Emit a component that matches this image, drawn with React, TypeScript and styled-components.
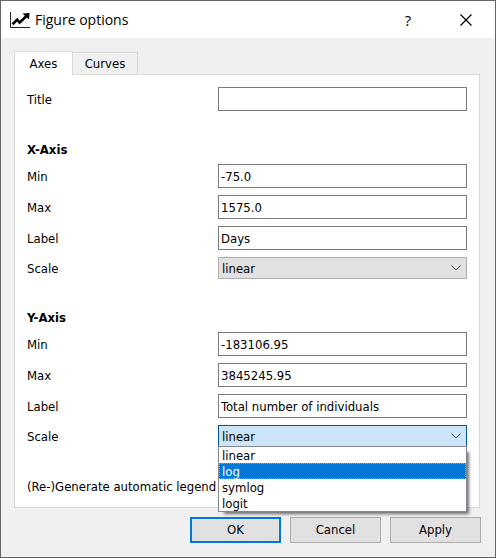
import React, { useState } from "react";
import styled, { createGlobalStyle } from "styled-components";

const GlobalStyle = createGlobalStyle`
  *, *::before, *::after { box-sizing: border-box; }
  body {
    margin: 0;
    background: #f0f0f0;
    color: #000;
    font: 13px/16px "DejaVu Sans Condensed", "Noto Sans", sans-serif;
  }
  button, input, select { font: inherit; color: inherit; }
`;

const Dialog = styled.main`
  min-height: 100vh;
  display: flex;
  flex-direction: column;
  border: 1px solid #646465;
  background: #f0f0f0;
`;

const TitleBar = styled.header`
  display: flex;
  align-items: center;
  height: 37px;
  padding-left: 9px;
  background: #fff;
`;

const AppIcon = styled.svg`
  width: 20px;
  height: 18px;
  margin-right: 5px;
`;

const Heading = styled.h1`
  flex: 1;
  margin: 0;
  font: 14px/20px "Open Sans", sans-serif;
`;

const CaptionButton = styled.button`
  display: flex;
  align-items: center;
  justify-content: center;
  width: 58px;
  height: 36px;
  padding: 0;
  border: 0;
  background: transparent;
  font: 500 15px/20px "Open Sans", sans-serif;
`;

const Body = styled.form`
  flex: 1;
  display: flex;
  flex-direction: column;
  padding: 13px 14px 14px 13px;
`;

const TabList = styled.div`
  display: flex;
  align-items: flex-end;
`;

const Tab = styled.button<{ $active: boolean }>`
  position: relative;
  width: ${(p) => (p.$active ? 59 : 65)}px;
  height: ${(p) => (p.$active ? 24 : 22)}px;
  margin-bottom: ${(p) => (p.$active ? -1 : 0)}px;
  z-index: ${(p) => (p.$active ? 1 : 0)};
  padding: 0;
  border: 1px solid #d9d9d9;
  border-bottom: 0;
  border-left-width: ${(p) => (p.$active ? 1 : 0)}px;
  background: ${(p) => (p.$active ? "#fff" : "#f0f0f0")};
`;

const Panel = styled.section`
  margin-right: 1px;
  padding: 12px;
  border: 1px solid #d9d9d9;
  background: #fff;
`;

const Group = styled.fieldset`
  display: flex;
  flex-direction: column;
  gap: 7px;
  min-width: 0;
  margin: 0 0 30px;
  padding: 0;
  border: 0;
`;

const Legend = styled.legend`
  padding: 0;
  margin-bottom: 5px;
  font-weight: 700;
  line-height: 18px;
`;

const Row = styled.div`
  display: grid;
  grid-template-columns: 185px minmax(0, 1fr);
  column-gap: 6px;
  align-items: center;
`;

const Label = styled.label`
  padding-top: 2px;
  white-space: nowrap;
`;

const TextBox = styled.input`
  width: 100%;
  height: 24px;
  padding: 0 2px;
  border: 1px solid #7a7a7a;
  background: #fff;
  outline: 0;
`;

const Combo = styled.div`
  position: relative;
  display: flex;
  align-items: center;
`;

const Select = styled.select<{ $open: boolean }>`
  appearance: none;
  width: 100%;
  height: 22px;
  padding: 2px 24px 0 3px;
  border: 1px solid ${(p) => (p.$open ? "#005499" : "#adadad")};
  border-radius: 0;
  background: ${(p) => (p.$open ? "#cce4f7" : "#e1e1e1")};
  outline: 0;
`;

const Chevron = styled.svg`
  position: absolute;
  right: 6px;
  width: 10px;
  height: 6px;
  pointer-events: none;
`;

const Popup = styled.ul`
  position: absolute;
  z-index: 2;
  top: 21px;
  left: 0;
  right: 0;
  margin: 0;
  padding: 0;
  border: 1px solid #828790;
  background: #fff;
  box-shadow: 4px 4px 3px -2px rgba(0, 0, 0, 0.55);
  list-style: none;
`;

const Option = styled.li<{ $selected: boolean }>`
  height: 16px;
  padding: 0 3px;
  line-height: 18px;
  color: ${(p) => (p.$selected ? "#fff" : "#000")};
  background: ${(p) => (p.$selected ? "#0078d7" : "transparent")};
  outline: ${(p) => (p.$selected ? "1px dotted #ff8728" : "0")};
  outline-offset: -1px;
`;

const CheckBox = styled.input`
  width: 13px;
  height: 13px;
  margin: 0;
`;

const Footer = styled.footer`
  display: flex;
  justify-content: flex-end;
  gap: 9px;
  margin-top: 9px;
`;

const PushButton = styled.button<{ $primary?: boolean }>`
  width: 91px;
  height: 26px;
  padding: 0;
  border: ${(p) => (p.$primary ? "2px solid #0078d7" : "1px solid #adadad")};
  background: #e1e1e1;
`;

const SCALES = ["linear", "log", "symlog", "logit"];

function Field({ id, label, value = "" }: { id: string; label: string; value?: string }) {
  return (
    <Row>
      <Label htmlFor={id}>{label}</Label>
      <TextBox id={id} type="text" defaultValue={value} />
    </Row>
  );
}

function ScaleField({ id, initiallyOpen = false }: { id: string; initiallyOpen?: boolean }) {
  const [value, setValue] = useState("linear");
  const [open, setOpen] = useState(initiallyOpen);
  const [hovered, setHovered] = useState("log");
  return (
    <Row>
      <Label htmlFor={id}>Scale</Label>
      <Combo>
        <Select
          id={id}
          $open={open}
          value={value}
          onChange={(e) => setValue(e.target.value)}
          onMouseDown={(e) => {
            e.preventDefault();
            setOpen(!open);
          }}
        >
          {SCALES.map((s) => (
            <option key={s}>{s}</option>
          ))}
        </Select>
        <Chevron viewBox="0 0 10 6" aria-hidden="true">
          <path d="M0.5 0.5 5 5 9.5 0.5" fill="none" stroke="#444" />
        </Chevron>
        {open && (
          <Popup role="listbox" aria-label="Scale">
            {SCALES.map((s) => (
              <Option
                key={s}
                role="option"
                aria-selected={s === hovered}
                $selected={s === hovered}
                onMouseEnter={() => setHovered(s)}
                onClick={() => {
                  setValue(s);
                  setOpen(false);
                }}
              >
                {s}
              </Option>
            ))}
          </Popup>
        )}
      </Combo>
    </Row>
  );
}

export default function App() {
  return (
    <>
      <GlobalStyle />
      <Dialog>
        <TitleBar>
          <AppIcon viewBox="0 0 20 18" aria-hidden="true">
            <path d="M0.5 1V16.5H20" fill="none" stroke="#222" />
            <path d="M2.5 13.2 7.2 8.6 9.6 11.6 16.5 5" fill="none" stroke="#000" strokeWidth="2.6" />
            <path d="M12.5 2.5 19.5 2 19 8.5Z" />
          </AppIcon>
          <Heading>Figure options</Heading>
          <CaptionButton type="button" aria-label="Help">?</CaptionButton>
          <CaptionButton type="button" aria-label="Close">
            <svg width="12" height="12" viewBox="0 0 12 12" aria-hidden="true">
              <path d="M0.5 0.5 11.5 11.5M11.5 0.5 0.5 11.5" stroke="#000" strokeWidth="1.2" />
            </svg>
          </CaptionButton>
        </TitleBar>
        <Body onSubmit={(e) => e.preventDefault()}>
          <TabList role="tablist">
            <Tab type="button" role="tab" aria-selected="true" $active>Axes</Tab>
            <Tab type="button" role="tab" aria-selected="false" $active={false}>Curves</Tab>
          </TabList>
          <Panel role="tabpanel">
            <Group>
              <Field id="title" label="Title" />
            </Group>
            <Group>
              <Legend>X-Axis</Legend>
              <Field id="x-min" label="Min" value="-75.0" />
              <Field id="x-max" label="Max" value="1575.0" />
              <Field id="x-label" label="Label" value="Days" />
              <ScaleField id="x-scale" />
            </Group>
            <Group>
              <Legend>Y-Axis</Legend>
              <Field id="y-min" label="Min" value="-183106.95" />
              <Field id="y-max" label="Max" value="3845245.95" />
              <Field id="y-label" label="Label" value="Total number of individuals" />
              <ScaleField id="y-scale" initiallyOpen />
            </Group>
            <Row>
              <Label htmlFor="legend">(Re-)Generate automatic legend</Label>
              <CheckBox id="legend" type="checkbox" />
            </Row>
          </Panel>
          <Footer>
            <PushButton type="submit" $primary>OK</PushButton>
            <PushButton type="button">Cancel</PushButton>
            <PushButton type="button">Apply</PushButton>
          </Footer>
        </Body>
      </Dialog>
    </>
  );
}
